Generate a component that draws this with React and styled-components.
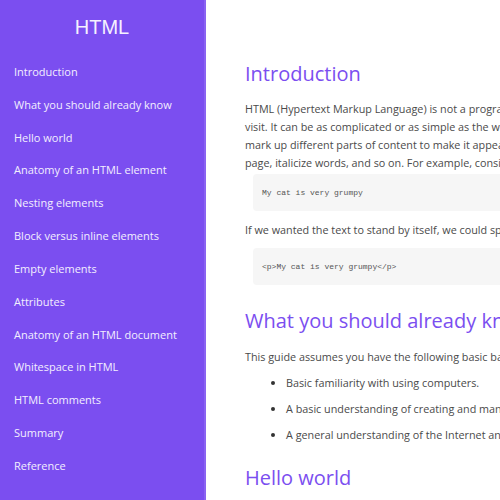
import React from 'react';
import styled, { createGlobalStyle } from 'styled-components';

const GlobalStyle = createGlobalStyle`
  html, body {
    margin: 0;
    padding: 0;
    overflow: hidden;
    background: #ffffff;
  }
`;

const Page = styled.div`
  display: flex;
  width: 1100px;
  height: 500px;
  font-family: 'Open Sans', 'Noto Sans', sans-serif;
`;

const Sidebar = styled.nav`
  flex: 0 0 204px;
  background: #7b4ef0;
  border-right: 2px solid #8a63f2;
  color: #f3eefe;
  display: flex;
  flex-direction: column;
`;

const SideTitle = styled.h1`
  margin: 0;
  padding: 15px 0 0;
  text-align: center;
  font-family: 'Liberation Sans', Arial, sans-serif;
  font-weight: 400;
  font-size: 20px;
  line-height: 24px;
  color: #f5f1ff;
`;

const NavList = styled.ul`
  list-style: none;
  margin: 0;
  padding: 24px 0 0 14px;
  display: flex;
  flex-direction: column;
  gap: 14.83px;
`;

const NavItem = styled.li`
  font-size: 11px;
  line-height: 18px;
`;

const Main = styled.main`
  flex: 1;
  padding: 60px 0 0 39px;
  color: #4a4a4a;
`;

const Heading = styled.h2`
  margin: ${(p) => p.top || '0'} 0 0;
  font-size: 20px;
  font-weight: 400;
  line-height: 28px;
  color: #7b4ef0;
`;

const Para = styled.p`
  margin: ${(p) => p.top || '12px'} 0 0;
  font-size: 10.8px;
  line-height: 18px;
  white-space: nowrap;
`;

const Code = styled.pre`
  margin: ${(p) => p.top || '2px'} 0 0 8px;
  padding: 13px 9px;
  width: 700px;
  background: #f6f6f6;
  border-radius: 4px;
  font-family: 'Liberation Mono', 'DejaVu Sans Mono', monospace;
  font-size: 8px;
  line-height: 11px;
  color: #555;
`;

const Bullets = styled.ul`
  margin: 8px 0 0;
  padding: 0 0 0 41px;
  font-size: 10.8px;
  line-height: 18px;
  display: flex;
  flex-direction: column;
  gap: 8px;

  li::marker {
    color: #333;
  }
`;

const navItems = [
  'Introduction',
  'What you should already know',
  'Hello world',
  'Anatomy of an HTML element',
  'Nesting elements',
  'Block versus inline elements',
  'Empty elements',
  'Attributes',
  'Anatomy of an HTML document',
  'Whitespace in HTML',
  'HTML comments',
  'Summary',
  'Reference',
];

const App = () => (
  <>
    <GlobalStyle />
    <Page>
      <Sidebar>
        <SideTitle>HTML</SideTitle>
        <NavList>
          {navItems.map((item) => (
            <NavItem key={item}>{item}</NavItem>
          ))}
        </NavList>
      </Sidebar>
      <Main>
        <Heading>Introduction</Heading>
        <Para>
          HTML (Hypertext Markup Language) is not a programming language. It is a markup language that tells web browsers how to structure the web pages you
          <br />
          visit. It can be as complicated or as simple as the web developer wants it to be. HTML consists of a series of elements, which you use to enclose, wrap, or
          <br />
          mark up different parts of content to make it appear or act in a certain way. The enclosing tags can make content into a hyperlink to connect to another
          <br />
          page, italicize words, and so on. For example, consider the following line of text:
        </Para>
        <Code>My cat is very grumpy</Code>
        <Para top='10px'>
          If we wanted the text to stand by itself, we could specify that it is a paragraph by enclosing it in paragraph tags:
        </Para>
        <Code top='9px'>{'<p>My cat is very grumpy</p>'}</Code>
        <Heading top='22px'>What you should already know</Heading>
        <Para top='13px'>This guide assumes you have the following basic background:</Para>
        <Bullets>
          <li>Basic familiarity with using computers.</li>
          <li>A basic understanding of creating and managing files.</li>
          <li>A general understanding of the Internet and the World Wide Web.</li>
        </Bullets>
        <Heading top='20px'>Hello world</Heading>
      </Main>
    </Page>
  </>
);

export default App;
